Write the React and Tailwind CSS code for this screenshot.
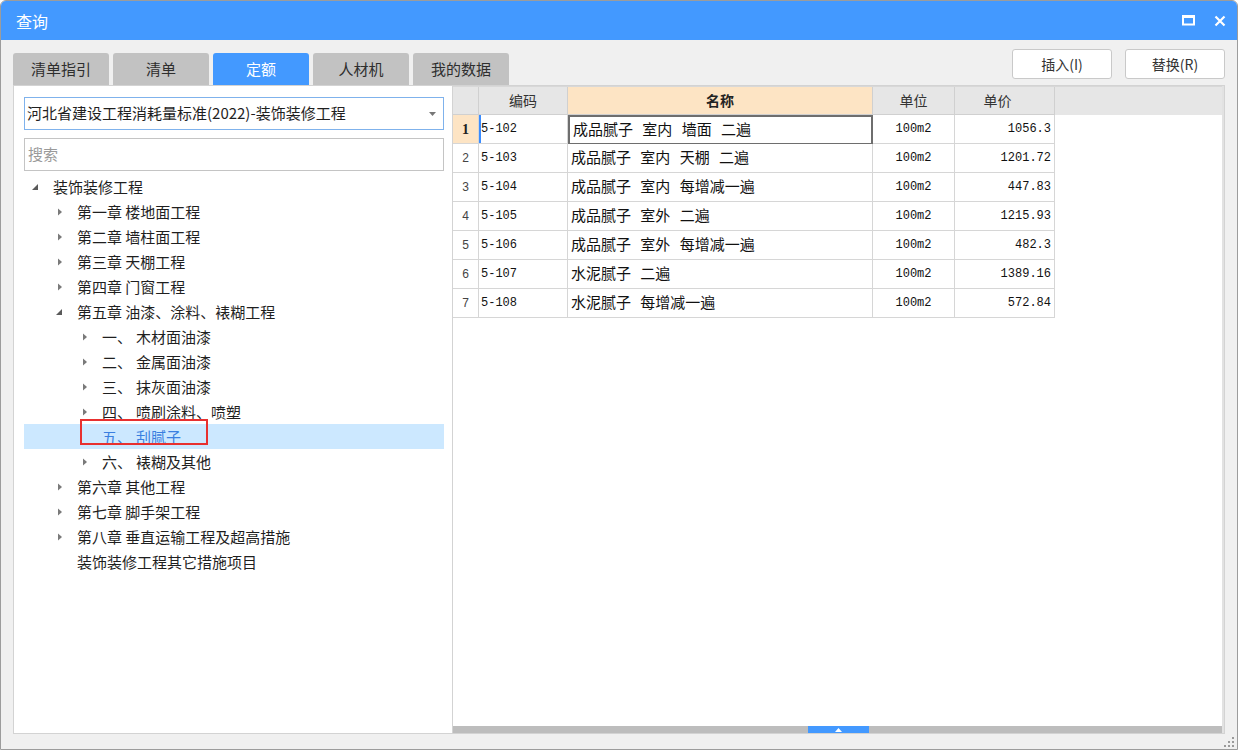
import React from 'react';

const tree = [
  { level: 0, label: '装饰装修工程', arrow: 'open' },
  { level: 1, label: '第一章 楼地面工程', arrow: 'closed' },
  { level: 1, label: '第二章 墙柱面工程', arrow: 'closed' },
  { level: 1, label: '第三章 天棚工程', arrow: 'closed' },
  { level: 1, label: '第四章 门窗工程', arrow: 'closed' },
  { level: 1, label: '第五章 油漆、涂料、裱糊工程', arrow: 'open' },
  { level: 2, num: '一、', label: '木材面油漆', arrow: 'closed' },
  { level: 2, num: '二、', label: '金属面油漆', arrow: 'closed' },
  { level: 2, num: '三、', label: '抹灰面油漆', arrow: 'closed' },
  { level: 2, num: '四、', label: '喷刷涂料、喷塑', arrow: 'closed' },
  { level: 2, num: '五、', label: '刮腻子', arrow: null, selected: true },
  { level: 2, num: '六、', label: '裱糊及其他', arrow: 'closed' },
  { level: 1, label: '第六章 其他工程', arrow: 'closed' },
  { level: 1, label: '第七章 脚手架工程', arrow: 'closed' },
  { level: 1, label: '第八章 垂直运输工程及超高措施', arrow: 'closed' },
  { level: 1, label: '装饰装修工程其它措施项目', arrow: null },
];

const rows = [
  ['5-102', '成品腻子 室内 墙面 二遍', '100m2', '1056.3'],
  ['5-103', '成品腻子 室内 天棚 二遍', '100m2', '1201.72'],
  ['5-104', '成品腻子 室内 每增减一遍', '100m2', '447.83'],
  ['5-105', '成品腻子 室外 二遍', '100m2', '1215.93'],
  ['5-106', '成品腻子 室外 每增减一遍', '100m2', '482.3'],
  ['5-107', '水泥腻子 二遍', '100m2', '1389.16'],
  ['5-108', '水泥腻子 每增减一遍', '100m2', '572.84'],
];

const tabs = ['清单指引', '清单', '定额', '人材机', '我的数据'];

function Arrow({ type }) {
  if (type === 'open') {
    return (
      <svg width="12" height="12" viewBox="0 0 12 12">
        <path d="M8 3 L8 9 L2 9 Z" fill="#5a5a5a" />
      </svg>
    );
  }
  if (type === 'closed') {
    return (
      <svg width="12" height="12" viewBox="0 0 12 12">
        <path d="M4 2.5 L8 6 L4 9.5 Z" fill="#7a7a7a" />
      </svg>
    );
  }
  return <span className="w-[12px]" />;
}

const padByLevel = ['pl-[6px]', 'pl-[30px]', 'pl-[55px]'];

function TreeRow({ item }) {
  return (
    <div
      className={`relative h-[25px] flex items-center ${padByLevel[item.level]} ${
        item.selected ? 'bg-[#cce8ff]' : ''
      }`}
    >
      <span className="w-[12px] flex items-center justify-center">
        <Arrow type={item.arrow} />
      </span>
      <span
        className={`ml-[11px] whitespace-pre text-[15px] leading-[25px] ${
          item.selected ? 'text-[#3a7fe0]' : 'text-[#1f1f1f]'
        }`}
      >
        {item.num ? (
          <>
            <span>{item.num}</span>
            <span className="ml-[4px]">{item.label}</span>
          </>
        ) : (
          item.label
        )}
      </span>
      {item.selected && (
        <div className="absolute left-[56px] top-[-5px] w-[128px] h-[26px] border-2 border-[#e8302f]" />
      )}
    </div>
  );
}

const cols = 'grid grid-cols-[26px_89px_305px_82px_100px]';
const mono = "font-['Liberation_Mono',monospace] text-[12px]";

export default function App() {
  return (
    <div className="w-[1238px] h-[750px] flex flex-col bg-[#f0f0f0] border border-[#9c9c9c] rounded-t-[6px] overflow-hidden font-['Noto_Sans_CJK_SC','Noto_Sans',sans-serif] text-[#222]">
      {/* Title bar */}
      <div className="h-[39px] shrink-0 bg-[#4399ff] flex items-center justify-between pl-[15px] pr-[11px]">
        <span className="text-white text-[16px] leading-none">查询</span>
        <div className="flex items-center gap-[19px]">
          <svg width="13" height="11" viewBox="0 0 13 11">
            <rect x="1" y="1.5" width="11" height="8" fill="none" stroke="#fff" strokeWidth="2" />
            <rect x="0" y="0" width="13" height="3" fill="#fff" />
          </svg>
          <svg width="12" height="12" viewBox="0 0 12 12">
            <path d="M1.5 1.5 L10.5 10.5 M10.5 1.5 L1.5 10.5" stroke="#fff" strokeWidth="2.2" />
          </svg>
        </div>
      </div>

      {/* Body */}
      <div className="flex-1 flex flex-col px-[12px] pb-[15px]">
        <div className="h-[45px] shrink-0 flex justify-between">
          <div className="flex gap-[4px] mt-[13px]">
            {tabs.map((t) => (
              <div
                key={t}
                className={`w-[96px] h-[32px] rounded-t-[3px] flex items-center justify-center text-[15px] ${
                  t === '定额' ? 'bg-[#4399ff] text-white' : 'bg-[#c2c2c2] text-[#2e2e2e]'
                }`}
              >
                {t}
              </div>
            ))}
          </div>
          <div className="flex gap-[13px] mt-[9px]">
            {['插入(I)', '替换(R)'].map((b) => (
              <div
                key={b}
                className="w-[100px] h-[30px] bg-white border border-[#c9c9c9] rounded-[3px] flex items-center justify-center text-[14px] text-[#333]"
              >
                {b}
              </div>
            ))}
          </div>
        </div>

        {/* Panels */}
        <div className="flex-1 flex bg-white border border-[#d3d3d3]">
          {/* Left */}
          <div className="w-[438px] shrink-0 pt-[11px] pl-[10px] pr-[8px]">
            <div className="h-[33px] border border-[#7fb2ec] flex items-center justify-between pl-[2px] pr-[7px]">
              <span className="text-[15px] text-[#1f1f1f]">河北省建设工程消耗量标准(2022)-装饰装修工程</span>
              <svg width="7" height="4" viewBox="0 0 7 4">
                <path d="M0 0 L7 0 L3.5 4 Z" fill="#777" />
              </svg>
            </div>
            <div className="mt-[8px] h-[33px] border border-[#c4c4c4] flex items-center pl-[3px]">
              <span className="text-[15px] text-[#9a9a9a]">搜索</span>
            </div>
            <div className="mt-[3px]">
              {tree.map((item, i) => (
                <TreeRow key={i} item={item} />
              ))}
            </div>
          </div>

          {/* Right */}
          <div className="flex-1 flex flex-col border-l border-[#d3d3d3] border-r-2 border-r-[#e2e2e2]">
            <div className="flex-1">
              <div className={`${cols} h-[29px] bg-[#e6e6e6] border-t border-[#d8d8d8]`}>
                <div className="border-r border-b border-[#d0d0d0]" />
                <div className="border-r border-b border-[#d0d0d0] flex items-center justify-center text-[14px] text-[#333]">编码</div>
                <div className="border-r border-b border-[#d0d0d0] bg-[#fde4c4] flex items-center justify-center text-[14px] font-bold text-[#222]">名称</div>
                <div className="border-r border-b border-[#d0d0d0] flex items-center justify-center text-[14px] text-[#333]">单位</div>
                <div className="border-r border-b border-[#d0d0d0] flex items-center justify-center pr-[14px] text-[14px] text-[#333]">单价</div>
              </div>
              {rows.map((r, i) => (
                <div key={i} className={`${cols} h-[29px]`}>
                  <div
                    className={`border-r border-b border-[#d6d6d6] flex items-center justify-center ${
                      i === 0
                        ? "bg-[#fde4c4] font-['Liberation_Serif',serif] font-bold text-[14px] text-[#222]"
                        : "font-['Liberation_Sans',sans-serif] text-[12px] text-[#444]"
                    }`}
                  >
                    {i + 1}
                  </div>
                  <div
                    className={`relative border-r border-b border-[#d6d6d6] flex items-center pl-[2px] ${mono} text-[#111]`}
                  >
                    {i === 0 && <div className="absolute left-0 top-0 bottom-0 w-[2px] bg-[#3a8cff]" />}
                    {r[0]}
                  </div>
                  <div
                    className={`border-b flex items-center pl-[3px] pb-[3px] text-[15px] leading-none text-[#111] whitespace-pre [word-spacing:6px] ${
                      i === 0 ? 'border-2 border-[#6e6e6e]' : 'border-r border-[#d6d6d6]'
                    }`}
                  >
                    {r[1]}
                  </div>
                  <div className={`border-r border-b border-[#d6d6d6] flex items-center justify-center ${mono} text-[#111]`}>
                    {r[2]}
                  </div>
                  <div className={`border-r border-b border-[#d6d6d6] flex items-center justify-end pr-[3px] ${mono} text-[#111]`}>
                    {r[3]}
                  </div>
                </div>
              ))}
            </div>
            {/* Horizontal scrollbar */}
            <div className="h-[7px] bg-[#bdbdbd] flex">
              <div className="ml-[355px] w-[61px] h-[7px] bg-[#4399ff] flex items-center justify-center">
                <svg width="7" height="4" viewBox="0 0 7 4">
                  <path d="M0 4 L3.5 0 L7 4 Z" fill="#fff" />
                </svg>
              </div>
            </div>
          </div>
        </div>
      </div>

      {/* Resize grip */}
      <div className="relative h-0">
        <svg className="absolute right-[3px] bottom-[2px]" width="10" height="10" viewBox="0 0 10 10">
          <rect x="8" y="0" width="2" height="2" fill="#9a9a9a" />
          <rect x="4" y="4" width="2" height="2" fill="#9a9a9a" />
          <rect x="8" y="4" width="2" height="2" fill="#9a9a9a" />
          <rect x="0" y="8" width="2" height="2" fill="#9a9a9a" />
          <rect x="4" y="8" width="2" height="2" fill="#9a9a9a" />
          <rect x="8" y="8" width="2" height="2" fill="#9a9a9a" />
        </svg>
      </div>
    </div>
  );
}
